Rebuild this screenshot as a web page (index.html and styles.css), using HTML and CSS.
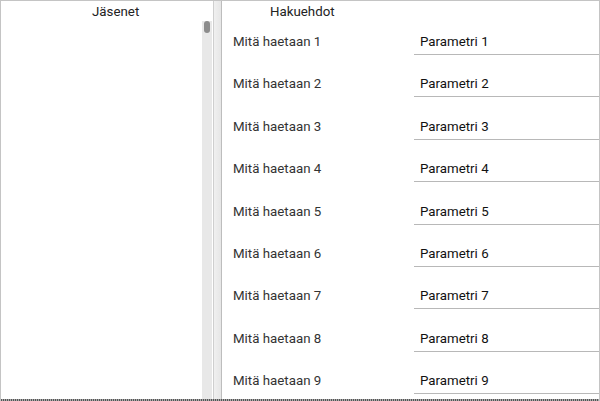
FILE: index.html
```html
<!DOCTYPE html>
<html>
<head>
<meta charset="utf-8">
<link rel="stylesheet" href="styles.css">
</head>
<body>
<div class="frame">
  <div class="left">
    <div class="left-head">Jäsenet</div>
    <div class="left-body">
      <div class="list"></div>
      <div class="vscroll"><div class="thumb"></div></div>
    </div>
  </div>
  <div class="splitter"></div>
  <div class="right">
    <div class="right-head">Hakuehdot</div>
    <div class="rows">
      <div class="row"><span class="label">Mitä haetaan 1</span><span class="field">Parametri 1</span></div>
      <div class="row"><span class="label">Mitä haetaan 2</span><span class="field">Parametri 2</span></div>
      <div class="row"><span class="label">Mitä haetaan 3</span><span class="field">Parametri 3</span></div>
      <div class="row"><span class="label">Mitä haetaan 4</span><span class="field">Parametri 4</span></div>
      <div class="row"><span class="label">Mitä haetaan 5</span><span class="field">Parametri 5</span></div>
      <div class="row"><span class="label">Mitä haetaan 6</span><span class="field">Parametri 6</span></div>
      <div class="row"><span class="label">Mitä haetaan 7</span><span class="field">Parametri 7</span></div>
      <div class="row"><span class="label">Mitä haetaan 8</span><span class="field">Parametri 8</span></div>
      <div class="row"><span class="label">Mitä haetaan 9</span><span class="field">Parametri 9</span></div>
    </div>
  </div>
</div>
</body>
</html>
```
FILE: styles.css
```css
html, body {
  margin: 0;
  padding: 0;
  background: #ffffff;
}
body {
  font-family: Roboto, "Liberation Sans", sans-serif;
  font-size: 13.3px;
  color: #333333;
  overflow: hidden;
}
.frame {
  box-sizing: border-box;
  width: 600px;
  height: 401px;
  border: 1px solid #c4c4c4;
  border-bottom: none;
  display: flex;
  position: relative;
  overflow: hidden;
}
.frame::after {
  content: "";
  position: absolute;
  left: 0;
  right: 0;
  bottom: 0;
  height: 2px;
  background:
    repeating-linear-gradient(90deg, #555 0 1px, #aaa 1px 2px);
}
.left {
  width: 212px;
  display: flex;
  flex-direction: column;
}
.left-head {
  height: 20px;
  line-height: 22px;
  padding-left: 91px;
  color: #222;
}
.left-body {
  flex: 1;
  display: flex;
}
.list {
  flex: 1;
}
.vscroll {
  width: 10px;
  background: #e8e8e8;
  margin-right: 1px;
}
.thumb {
  width: 6px;
  height: 12px;
  margin: 0 auto;
  border-radius: 3px;
  background: #8c8c8c;
}
.splitter {
  width: 9px;
  box-sizing: border-box;
  border-left: 1px solid #cfcfcf;
  border-right: 1px solid #bdbdbd;
  background: linear-gradient(90deg, #f0f0f0, #e6e6e6);
}
.right {
  flex: 1;
  display: flex;
  flex-direction: column;
}
.right-head {
  height: 20px;
  line-height: 22px;
  padding-left: 48px;
  color: #222;
}
.rows {
  display: flex;
  flex-direction: column;
}
.row {
  height: 42.4px;
  flex: none;
  display: flex;
  align-items: flex-start;
  padding-left: 11px;
  box-sizing: border-box;
}
.label {
  width: 181px;
  line-height: 16px;
  padding-top: 13px;
  color: #333;
}
.field {
  flex: 1;
  box-sizing: border-box;
  padding-left: 6px;
  padding-top: 13px;
  line-height: 16px;
  height: 34px;
  border-bottom: 1px solid #b8b8b8;
  color: #111;
}
```
